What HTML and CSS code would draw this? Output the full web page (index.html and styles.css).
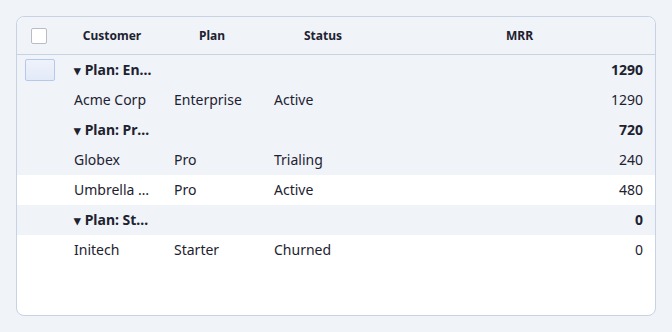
FILE: index.html
```html
<!DOCTYPE html>
<html>
<head>
<meta charset="utf-8">
<link rel="stylesheet" href="styles.css">
</head>
<body>
<div class="card">
  <div class="row header">
    <div class="cell sel"><span class="checkbox"></span></div>
    <div class="cell hcell">Customer</div>
    <div class="cell hcell">Plan</div>
    <div class="cell hcell">Status</div>
    <div class="cell hcell">MRR</div>
  </div>
  <div class="row group shade">
    <div class="cell sel"><span class="groupbox"></span></div>
    <div class="cell gname"><span class="caret">▾</span> Plan: Enterprise (1)</div>
    <div class="cell"></div>
    <div class="cell"></div>
    <div class="cell num">1290</div>
  </div>
  <div class="row shade">
    <div class="cell sel"></div>
    <div class="cell">Acme Corp</div>
    <div class="cell">Enterprise</div>
    <div class="cell">Active</div>
    <div class="cell num">1290</div>
  </div>
  <div class="row group shade">
    <div class="cell sel"></div>
    <div class="cell gname"><span class="caret">▾</span> Plan: Pro (2)</div>
    <div class="cell"></div>
    <div class="cell"></div>
    <div class="cell num">720</div>
  </div>
  <div class="row shade">
    <div class="cell sel"></div>
    <div class="cell">Globex</div>
    <div class="cell">Pro</div>
    <div class="cell">Trialing</div>
    <div class="cell num">240</div>
  </div>
  <div class="row">
    <div class="cell sel"></div>
    <div class="cell">Umbrella Corp</div>
    <div class="cell">Pro</div>
    <div class="cell">Active</div>
    <div class="cell num">480</div>
  </div>
  <div class="row group shade">
    <div class="cell sel"></div>
    <div class="cell gname"><span class="caret">▾</span> Plan: Starter (1)</div>
    <div class="cell"></div>
    <div class="cell"></div>
    <div class="cell num">0</div>
  </div>
  <div class="row">
    <div class="cell sel"></div>
    <div class="cell">Initech</div>
    <div class="cell">Starter</div>
    <div class="cell">Churned</div>
    <div class="cell num">0</div>
  </div>
</div>
</body>
</html>
```
FILE: styles.css
```css
html, body {
  margin: 0;
  padding: 0;
  background: #f0f3f8;
}
body {
  padding: 16px;
  font-family: "Noto Sans", "Open Sans", sans-serif;
  color: #1d2230;
}
.card {
  width: 638px;
  height: 298px;
  background: #ffffff;
  border: 1px solid #c7d2e2;
  border-radius: 8px;
}
.row {
  display: grid;
  grid-template-columns: 45px 100px 100px 122px 1fr;
  height: 30px;
  align-items: center;
  font-size: 14px;
}
.header {
  height: 37px;
  border-bottom: 1px solid #c7d2e2;
  background: #f0f3f8;
  border-radius: 8px 8px 0 0;
  font-size: 12px;
  font-weight: 700;
}
.shade {
  background: #f0f3f8;
}
.cell {
  padding: 0 12px 2px;
  white-space: nowrap;
  overflow: hidden;
  text-overflow: ellipsis;
  min-width: 0;
}
.header .cell {
  padding-bottom: 0;
}
.hcell {
  text-align: center;
}
.sel {
  padding: 0;
  height: 100%;
  display: flex;
  align-items: center;
  justify-content: center;
}
.header .sel {
  justify-content: flex-start;
  padding-left: 14px;
}
.checkbox {
  width: 14px;
  height: 14px;
  border: 1px solid #b9bcc2;
  border-radius: 2px;
  background: #ffffff;
}
.row:not(.header) .sel {
  justify-content: flex-start;
  padding: 0 0 0 8px;
}
.groupbox {
  width: 28px;
  height: 20px;
  border: 1px solid #b6c8ee;
  border-radius: 2px;
  background: linear-gradient(#eef2fb, #e3eaf8);
}
.group {
  font-weight: 700;
}
.gname {
  padding-right: 6px;
}
.caret {
  font-size: 13px;
}
.num {
  text-align: right;
}
```
